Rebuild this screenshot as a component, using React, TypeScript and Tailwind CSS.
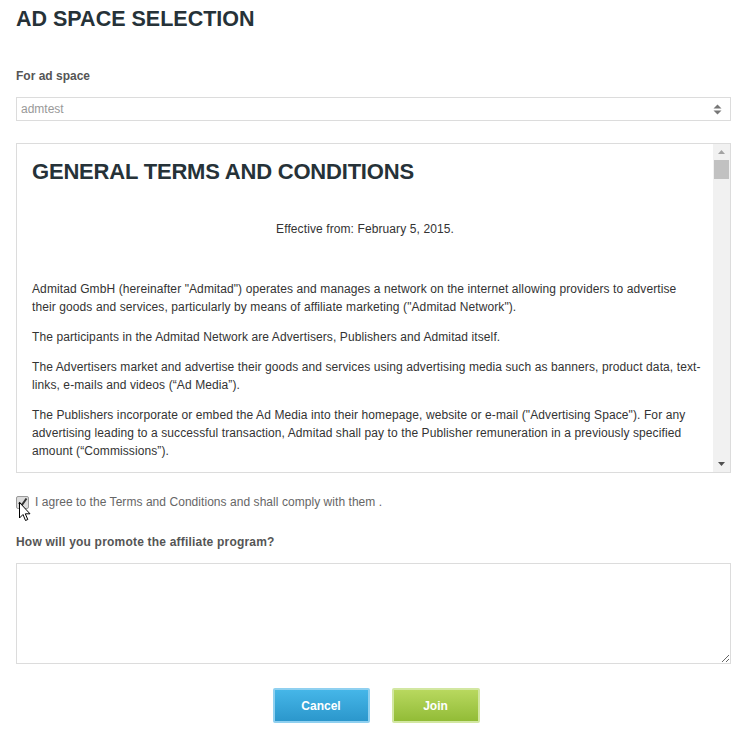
import React from "react";

export default function App() {
  return (
    <div
      className="relative w-[747px] h-[736px] bg-white px-4 flex flex-col overflow-hidden"
      style={{ fontFamily: '"Liberation Sans", Arial, sans-serif' }}
    >
      <h1 className="mt-[7px] text-[21.5px] leading-[24px] font-bold text-[#263238]">AD SPACE SELECTION</h1>

      <div className="mt-[37px] text-[12px] leading-[16px] font-bold text-[#555]">For ad space</div>

      <div className="mt-[13px] h-[24px] border border-[#dcdcdc] flex items-center justify-between pl-[4px] pr-[8px]">
        <span className="text-[12px] text-[#999]">admtest</span>
        <svg width="9" height="11" viewBox="0 0 9 11">
          <path d="M4.5 0.5 L8.5 4.5 L0.5 4.5 Z" fill="#777" />
          <path d="M4.5 10.5 L8.5 6.5 L0.5 6.5 Z" fill="#777" />
        </svg>
      </div>

      <div className="mt-[22px] h-[330px] border border-[#dcdcdc] flex overflow-hidden">
        <div className="flex-1 overflow-hidden pt-[15px] pl-[15px] pr-[11px] text-[12px] leading-[18px] text-[#333] tracking-[0.1px]">
          <h2 className="text-[22px] leading-[26px] font-bold text-[#263238] tracking-[-0.2px]">
            GENERAL TERMS AND CONDITIONS
          </h2>
          <p className="mt-[35px] text-center pr-[4px]">Effective from: February 5, 2015.</p>
          <p className="mt-[12px] h-[18px]"></p>
          <p className="mt-[12px]">
            Admitad GmbH (hereinafter "Admitad") operates and manages a network on the internet allowing providers to advertise
            <br />
            their goods and services, particularly by means of affiliate marketing ("Admitad Network").
          </p>
          <p className="mt-[12px]">The participants in the Admitad Network are Advertisers, Publishers and Admitad itself.</p>
          <p className="mt-[12px]">
            The Advertisers market and advertise their goods and services using advertising media such as banners, product data, text-links, e-mails and videos (“Ad Media”).
          </p>
          <p className="mt-[12px]">
            The Publishers incorporate or embed the Ad Media into their homepage, website or e-mail ("Advertising Space"). For any advertising leading to a successful transaction, Admitad shall pay to the Publisher remuneration in a previously specified amount (“Commissions”).
          </p>
        </div>
        <div className="w-[17px] bg-[#f1f1f1] flex flex-col items-center">
          <svg width="17" height="16" viewBox="0 0 17 16" className="shrink-0">
            <path d="M5 10 L8.5 6 L12 10 Z" fill="#a3a3a3" />
          </svg>
          <div className="w-[15px] h-[19px] bg-[#c1c1c1]"></div>
          <div className="flex-1"></div>
          <svg width="17" height="16" viewBox="0 0 17 16" className="shrink-0">
            <path d="M5 6 L8.5 10 L12 6 Z" fill="#505050" />
          </svg>
        </div>
      </div>

      <div className="mt-[21px] h-[16px] flex items-center">
        <div className="w-[13px] h-[13px] rounded-[2px] border border-[#9a9a9a] bg-[#dcdcdc] flex items-center justify-center">
          <svg width="11" height="11" viewBox="0 0 11 11">
            <path d="M2 5.5 L4.5 8.5 L9.5 1.5" stroke="#333" strokeWidth="2" fill="none" />
          </svg>
        </div>
        <span className="ml-[6px] text-[12px] text-[#666] tracking-[0.05px]">I agree to the Terms and Conditions and shall comply with them .</span>
      </div>

      <div className="mt-[24px] h-[16px] text-[12px] leading-[16px] font-bold text-[#555] tracking-[0.2px]">
        How will you promote the affiliate program?
      </div>

      <textarea className="mt-[13px] h-[101px] border border-[#dcdcdc] resize-y outline-none" />

      <div className="mt-[24px] flex justify-center gap-[22px] pl-[5px]">
        <button className="w-[97px] h-[35px] rounded-[2px] border-2 border-[#8fd0f0] bg-gradient-to-b from-[#45b6e8] to-[#2b97cc] text-white text-[12px] font-bold">
          Cancel
        </button>
        <button className="w-[88px] h-[35px] rounded-[2px] border-2 border-[#d2e7a1] bg-gradient-to-b from-[#b8d85e] to-[#92bc36] text-white text-[12px] font-bold">
          Join
        </button>
      </div>

      <svg className="absolute left-[19px] top-[502px]" width="13" height="21" viewBox="0 0 13 21">
        <path d="M0.5 0.5 L0.5 16 L4 12.5 L6.5 18.5 L8.8 17.5 L6.3 11.8 L11 11.8 Z" fill="#fff" stroke="#000" strokeWidth="1" strokeLinejoin="round" />
      </svg>
    </div>
  );
}
